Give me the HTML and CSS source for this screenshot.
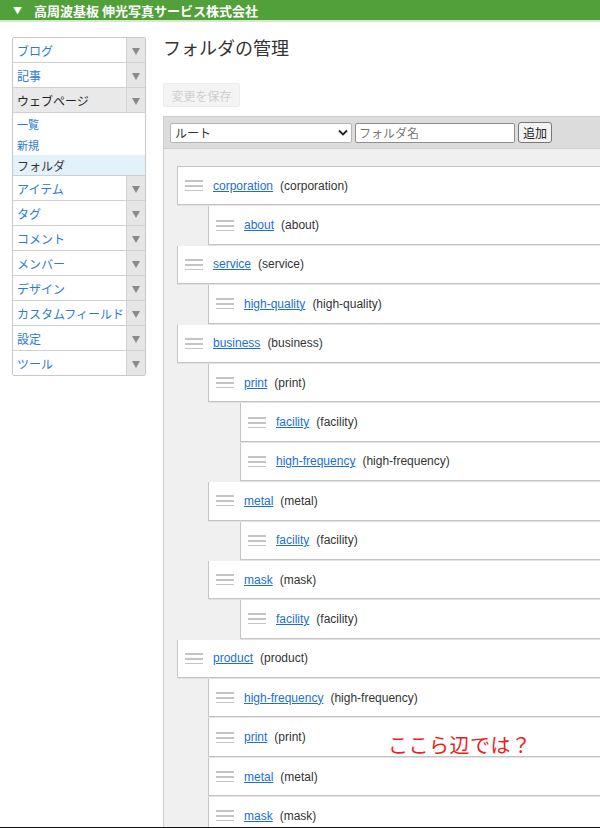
FILE: index.html
```html
<!DOCTYPE html>
<html lang="ja">
<head>
<meta charset="utf-8">
<title>フォルダの管理</title>
<link rel="stylesheet" href="styles.css">
</head>
<body>
<header class="topbar"><span class="tri">▼</span><span class="site">高周波基板 伸光写真サービス株式会社</span></header>
<div class="layout">
  <nav class="side">
    <div class="item"><a class="lbl">ブログ</a><span class="arr"></span></div>
    <div class="item"><a class="lbl">記事</a><span class="arr"></span></div>
    <div class="item open"><a class="lbl">ウェブページ</a><span class="arr"></span></div>
    <div class="sub"><a>一覧</a></div>
    <div class="sub small"><a>新規</a></div>
    <div class="sub cur"><a>フォルダ</a></div>
    <div class="item"><a class="lbl">アイテム</a><span class="arr"></span></div>
    <div class="item"><a class="lbl">タグ</a><span class="arr"></span></div>
    <div class="item"><a class="lbl">コメント</a><span class="arr"></span></div>
    <div class="item"><a class="lbl">メンバー</a><span class="arr"></span></div>
    <div class="item"><a class="lbl">デザイン</a><span class="arr"></span></div>
    <div class="item"><a class="lbl">カスタムフィールド</a><span class="arr"></span></div>
    <div class="item"><a class="lbl">設定</a><span class="arr"></span></div>
    <div class="item last"><a class="lbl">ツール</a><span class="arr"></span></div>
  </nav>
  <main class="main">
    <h1 class="title">フォルダの管理</h1>
    <button class="save" disabled>変更を保存</button>
    <section class="panel">
      <div class="toolbar">
        <div class="sel">ルート<svg class="chev" width="10" height="7" viewBox="0 0 10 7"><path d="M1 1.5 L5 5.5 L9 1.5" fill="none" stroke="#222" stroke-width="1.8"/></svg></div>
        <div class="inp">フォルダ名</div>
        <button class="add">追加</button>
      </div>
      <div class="tree">
        <ul class="lv">
          <li><div class="row"><span class="grip"></span><a>corporation</a><span class="code">(corporation)</span></div>
            <ul class="lv"><li><div class="row"><span class="grip"></span><a>about</a><span class="code">(about)</span></div></li></ul>
          </li>
          <li><div class="row"><span class="grip"></span><a>service</a><span class="code">(service)</span></div>
            <ul class="lv"><li><div class="row"><span class="grip"></span><a>high-quality</a><span class="code">(high-quality)</span></div></li></ul>
          </li>
          <li><div class="row"><span class="grip"></span><a>business</a><span class="code">(business)</span></div>
            <ul class="lv">
              <li><div class="row"><span class="grip"></span><a>print</a><span class="code">(print)</span></div>
                <ul class="lv">
                  <li><div class="row"><span class="grip"></span><a>facility</a><span class="code">(facility)</span></div></li>
                  <li><div class="row"><span class="grip"></span><a>high-frequency</a><span class="code">(high-frequency)</span></div></li>
                </ul>
              </li>
              <li><div class="row"><span class="grip"></span><a>metal</a><span class="code">(metal)</span></div>
                <ul class="lv"><li><div class="row"><span class="grip"></span><a>facility</a><span class="code">(facility)</span></div></li></ul>
              </li>
              <li><div class="row"><span class="grip"></span><a>mask</a><span class="code">(mask)</span></div>
                <ul class="lv"><li><div class="row"><span class="grip"></span><a>facility</a><span class="code">(facility)</span></div></li></ul>
              </li>
            </ul>
          </li>
          <li><div class="row"><span class="grip"></span><a>product</a><span class="code">(product)</span></div>
            <ul class="lv">
              <li><div class="row"><span class="grip"></span><a>high-frequency</a><span class="code">(high-frequency)</span></div></li>
              <li><div class="row"><span class="grip"></span><a>print</a><span class="code">(print)</span></div></li>
              <li><div class="row"><span class="grip"></span><a>metal</a><span class="code">(metal)</span></div></li>
              <li><div class="row"><span class="grip"></span><a>mask</a><span class="code">(mask)</span></div></li>
            </ul>
          </li>
        </ul>
      </div>
    </section>
  </main>
</div>
<p class="note">ここら辺では？</p>
</body>
</html>
```

FILE: styles.css
```css
html, body {
  margin: 0;
  padding: 0;
}
body {
  width: 600px;
  height: 828px;
  overflow: hidden;
  background: #fff;
  font-family: "Liberation Sans", "Noto Sans CJK JP", sans-serif;
  color: #333;
  position: relative;
}
body::after {
  content: "";
  position: absolute;
  left: 0;
  right: 0;
  bottom: 0;
  height: 1px;
  background: #111;
}
.topbar {
  height: 20px;
  background: #52a03a;
  border-bottom: 2px solid #d6e8cf;
  display: flex;
  align-items: center;
  color: #fff;
  font-weight: bold;
  font-size: 13px;
  font-family: "Noto Sans CJK JP", sans-serif;
  padding-left: 13px;
}
.tri {
  font-size: 9px;
  margin-right: 12px;
}
.layout {
  display: flex;
  align-items: flex-start;
  padding-top: 15px;
}
.side {
  width: 132px;
  margin-left: 12px;
  border: 1px solid #c9c9c9;
  border-radius: 2px;
  font-family: "Noto Sans CJK JP", sans-serif;
  font-size: 12px;
  flex: none;
}
.item {
  display: flex;
  height: 24px;
  border-bottom: 1px solid #d0d0d0;
}
.item.last {
  border-bottom: none;
}
.item .lbl {
  flex: 1;
  color: #2b7bd6;
  padding-left: 4px;
  display: flex;
  align-items: center;
  white-space: nowrap;
}
.item.open {
  background: #e9e9e9;
}
.item.open .lbl {
  color: #222;
}
.arr {
  width: 18px;
  flex: none;
  background: #e6e6e6;
  border-left: 1px solid #d4d4d4;
  display: flex;
  align-items: center;
  justify-content: center;
}
.arr::before {
  content: "";
  border-left: 4px solid transparent;
  border-right: 4px solid transparent;
  border-top: 7px solid #8a8a8a;
  margin-top: 2px;
}
.sub {
  height: 21px;
  display: flex;
  align-items: center;
  padding-left: 4px;
  color: #2b7bd6;
  font-size: 11px;
}
.sub.cur {
  background: #e3f1fa;
  color: #333;
  font-size: 12px;
  border-bottom: 1px solid #d0d0d0;
  height: 20px;
}
.main {
  flex: 1;
  margin-left: 17px;
  min-width: 0;
}
.title {
  margin: -3px 0 0;
  font-family: "Noto Sans CJK JP", sans-serif;
  font-weight: normal;
  font-size: 18px;
  color: #333;
  line-height: 26px;
}
.save {
  display: block;
  margin-top: 23px;
  width: 77px;
  height: 24px;
  border: 1px solid #ececec;
  border-radius: 2px;
  background: #f4f4f4;
  color: #cfcfcf;
  font-family: "Noto Sans CJK JP", serif;
  font-size: 12px;
  padding: 0;
}
.panel {
  margin-top: 9px;
  margin-right: -20px;
  border: 1px solid #cfcfcf;
  background: #f0f0f0;
  height: 800px;
}
.toolbar {
  height: 31px;
  background: #dcdcdc;
  border-bottom: 1px solid #cfcfcf;
  display: flex;
  align-items: center;
  padding-left: 6px;
  gap: 3px;
}
.sel {
  width: 172px;
  height: 18px;
  background: #fff;
  border: 1px solid #b5b5b5;
  border-radius: 2px;
  font-family: "Noto Sans CJK JP", sans-serif;
  font-size: 12px;
  color: #333;
  display: flex;
  align-items: center;
  justify-content: space-between;
  padding: 0 4px;
}
.chev {
  margin-right: -1px;
}
.inp {
  width: 155px;
  height: 18px;
  background: #fff;
  border: 1px solid #8f8f8f;
  border-radius: 2px;
  font-family: "Noto Sans CJK JP", sans-serif;
  font-size: 12px;
  color: #777;
  display: flex;
  align-items: center;
  padding-left: 3px;
}
.add {
  width: 34px;
  height: 21px;
  padding: 0;
  border: 1px solid #777;
  border-radius: 3px;
  background: #f3f3f3;
  font-family: "Noto Sans CJK JP", sans-serif;
  font-size: 12px;
  color: #222;
}
.tree {
  padding: 17px 0 0 13px;
}
.lv {
  list-style: none;
  margin: 0;
  padding: 0;
}
.lv .lv {
  padding-left: 31px;
}
.lv .lv .lv {
  padding-left: 32px;
}
.row {
  height: 37.4px;
  background: #fff;
  border: 1px solid #c4c4c4;
  border-top: none;
  box-shadow: 0 1px 0 #e2e2e2;
  display: flex;
  align-items: center;
  font-size: 12px;
  margin-bottom: 1px;
}
.tree > .lv > li:first-child > .row {
  border-top: 1px solid #c4c4c4;
}
.grip {
  width: 18px;
  height: 11px;
  margin-left: 7px;
  margin-right: 10px;
  background: linear-gradient(#c4c4c4, #c4c4c4) 0 0 / 100% 2px no-repeat,
              linear-gradient(#c4c4c4, #c4c4c4) 0 5px / 100% 2px no-repeat,
              linear-gradient(#c4c4c4, #c4c4c4) 0 10px / 100% 1px no-repeat;
}
.row a {
  color: #1b6fd1;
  text-decoration: underline;
  margin-right: 7px;
}
.code {
  color: #333;
}
.note {
  position: absolute;
  left: 388px;
  top: 731px;
  margin: 0;
  font-family: "Noto Sans CJK JP", sans-serif;
  font-size: 20px;
  line-height: 28px;
  letter-spacing: 0.5px;
  color: #ee1c1c;
}
```
